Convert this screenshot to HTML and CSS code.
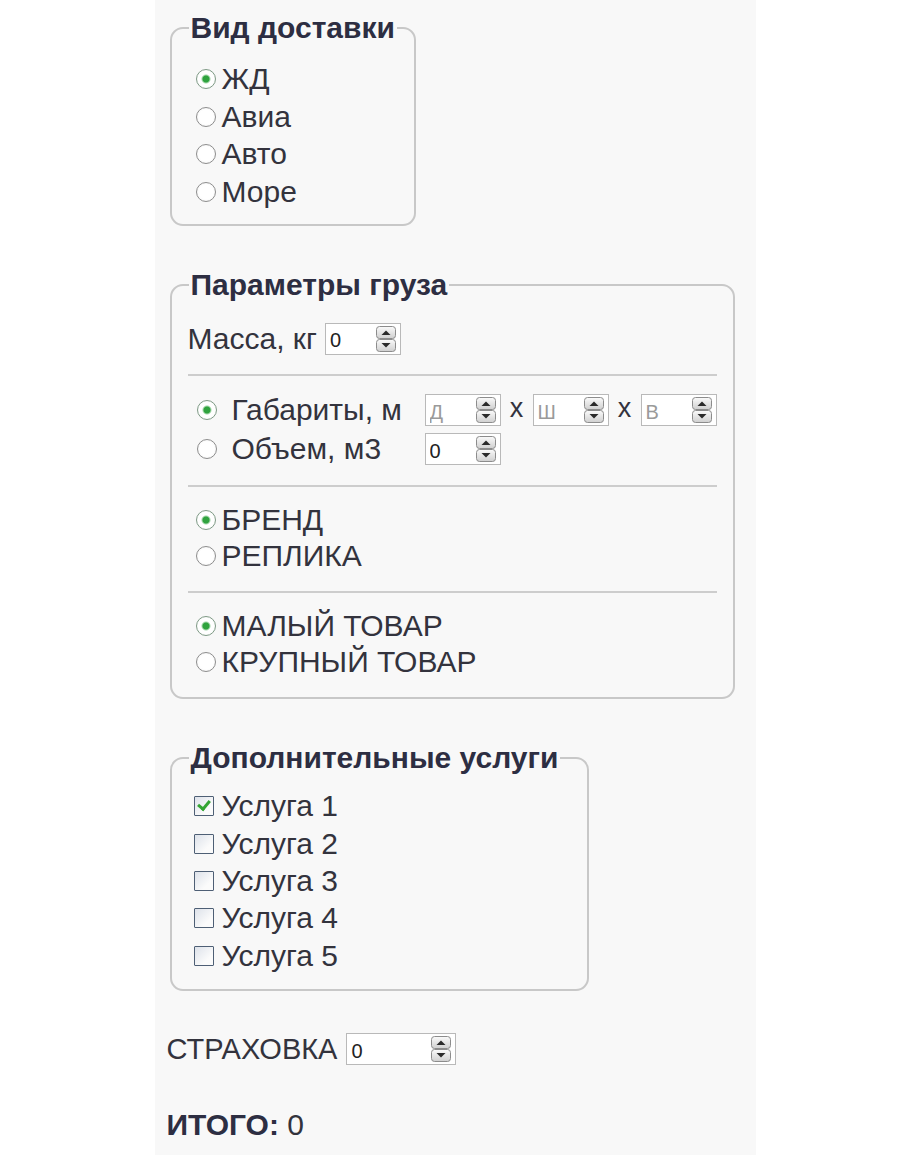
FILE: index.html
```html
<!DOCTYPE html>
<html lang="ru">
<head>
	<meta charset="UTF-8">
	<title>Калькулятор доставки</title>
	<link rel="stylesheet" href="styles.css">
</head>
<body>
	<svg class="defs" width="0" height="0">
		<defs>
			<linearGradient id="btn" x1="0" y1="0" x2="0" y2="1">
				<stop offset="0" stop-color="#fbfbfb"/>
				<stop offset="1" stop-color="#cfcfcf"/>
			</linearGradient>
			<symbol id="spin" viewBox="0 0 20 26">
				<rect x="0.5" y="0.5" width="19" height="12" rx="3" fill="url(#btn)" stroke="#8c8c8c"/>
				<rect x="0.5" y="13.5" width="19" height="12" rx="3" fill="url(#btn)" stroke="#8c8c8c"/>
				<path d="M5.5 9 L10 4.5 L14.5 9 Z" fill="#2a2a2a"/>
				<path d="M5.5 17 L10 21.5 L14.5 17 Z" fill="#2a2a2a"/>
			</symbol>
		</defs>
	</svg>

	<div class="page">

		<fieldset class="box delivery">
			<legend>Вид доставки</legend>
			<label class="opt"><input type="radio" name="dlv" checked>ЖД</label>
			<label class="opt"><input type="radio" name="dlv">Авиа</label>
			<label class="opt"><input type="radio" name="dlv">Авто</label>
			<label class="opt"><input type="radio" name="dlv">Море</label>
		</fieldset>

		<fieldset class="box cargo">
			<legend>Параметры груза</legend>
			<div class="group mass">
				<span>Масса, кг</span>
				<span class="spin"><input type="text" value="0"><svg><use href="#spin"/></svg></span>
			</div>
			<div class="group dims">
				<label class="opt"><input type="radio" name="mode" checked>Габариты, м</label>
				<div class="sizes">
					<span class="spin"><input type="text" placeholder="Д"><svg><use href="#spin"/></svg></span>
					<span class="x">x</span>
					<span class="spin"><input type="text" placeholder="Ш"><svg><use href="#spin"/></svg></span>
					<span class="x">x</span>
					<span class="spin"><input type="text" placeholder="В"><svg><use href="#spin"/></svg></span>
				</div>
				<label class="opt"><input type="radio" name="mode">Объем, м3</label>
				<div class="sizes">
					<span class="spin"><input type="text" value="0"><svg><use href="#spin"/></svg></span>
				</div>
			</div>
			<div class="group pair">
				<label class="opt"><input type="radio" name="brand" checked>БРЕНД</label>
				<label class="opt"><input type="radio" name="brand">РЕПЛИКА</label>
			</div>
			<div class="group pair">
				<label class="opt"><input type="radio" name="size" checked>МАЛЫЙ ТОВАР</label>
				<label class="opt"><input type="radio" name="size">КРУПНЫЙ ТОВАР</label>
			</div>
		</fieldset>

		<fieldset class="box extra">
			<legend>Дополнительные услуги</legend>
			<label class="opt"><input type="checkbox" checked>Услуга 1</label>
			<label class="opt"><input type="checkbox">Услуга 2</label>
			<label class="opt"><input type="checkbox">Услуга 3</label>
			<label class="opt"><input type="checkbox">Услуга 4</label>
			<label class="opt"><input type="checkbox">Услуга 5</label>
		</fieldset>

		<div class="insurance">
			<span>СТРАХОВКА</span>
			<span class="spin long"><input type="text" value="0"><svg><use href="#spin"/></svg></span>
		</div>

		<div class="total"><b>ИТОГО:</b> 0</div>

	</div>
</body>
</html>
```

FILE: styles.css
```css
body{
	margin: 0;
	background: #fff;
	font-family: "Liberation Sans", Arial, sans-serif;
	color: #33333d;
}
.defs{
	position: absolute;
}
.page{
	width: 601px;
	min-height: 1155px;
	margin: 0 auto;
	padding: 0 0 0 12px;
	box-sizing: border-box;
	background: #f8f8f8;
	font-size: 30px;
	overflow: hidden;
}
.box{
	margin: 13px 0 0 3px;
	padding: 0 16px;
	border: 2px solid #c8c8c8;
	border-radius: 13px;
}
.box legend{
	padding: 0 2px;
	margin-left: 1px;
	font-weight: bold;
	line-height: 30px;
	color: #2d2e42;
}
.delivery{
	width: 210px;
	padding-top: 17px;
	padding-bottom: 13px;
}
.delivery .opt{
	height: 37.7px;
}
.cargo{
	width: 528px;
	margin-top: 44px;
	padding-bottom: 0;
}
.extra{
	width: 383px;
	margin-top: 44px;
	padding-top: 15px;
	padding-bottom: 15px;
}
.opt{
	display: flex;
	align-items: center;
	height: 37.3px;
	white-space: nowrap;
}

/* radio & checkbox */
.opt input{
	-webkit-appearance: none;
	appearance: none;
	box-sizing: border-box;
	margin: 0 6px 0 8px;
	flex: none;
}
.opt input[type=radio]{
	width: 20px;
	height: 20px;
	border: 1.5px solid #8d8d8d;
	border-radius: 50%;
	background: radial-gradient(circle, #fff 0 55%, #ececec 100%);
}
.opt input[type=radio]:checked{
	border-color: #7f9a86;
	background: radial-gradient(circle, #2fa33e 0 3px, #a5d8ab 4px, #fff 5px, #fff 60%, #e4eee6 100%);
}
.opt input[type=checkbox]{
	position: relative;
	width: 20px;
	height: 20px;
	margin-left: 6px;
	margin-right: 8px;
	border: 1.5px solid #4e5f75;
	border-radius: 1px;
	background: linear-gradient(135deg, #dde2ea, #fbfbfb 70%);
}
.opt input[type=checkbox]:checked::after{
	content: "";
	position: absolute;
	left: 5px;
	top: 1px;
	width: 5px;
	height: 9px;
	border: solid #33a533;
	border-width: 0 3px 3px 0;
	transform: rotate(40deg);
}

/* cargo groups */
.group{
	padding: 15px 0 17px;
	border-top: 2px solid #cdcdcd;
}
.box legend + .group{
	border-top: none;
	padding-top: 21px;
	padding-bottom: 17px;
}
.pair .opt{
	height: 36px;
}
.mass{
	display: flex;
	align-items: center;
	gap: 8px;
	height: 36px;
}
.dims{
	display: grid;
	grid-template-columns: 237px auto;
	grid-auto-rows: 39px;
	align-items: center;
	padding-bottom: 16px;
}
.dims .opt{
	height: auto;
}
.dims .opt input{
	margin-left: 9px;
	margin-right: 15px;
}
.sizes{
	display: flex;
	align-items: center;
}
.x{
	width: 32px;
	text-align: center;
	font-size: 27px;
	line-height: 20px;
	padding-bottom: 4px;
}

/* spin fields */
.spin{
	display: inline-flex;
	align-items: center;
	width: 76px;
	height: 32px;
	box-sizing: border-box;
	border: 1.5px solid #b9b9b9;
	background: #fff;
}
.spin input{
	width: 100%;
	min-width: 0;
	height: 100%;
	padding: 4px 0 0 4px;
	box-sizing: border-box;
	border: none;
	outline: none;
	background: transparent;
	font-family: "Liberation Sans", Arial, sans-serif;
	font-size: 20px;
	color: #222;
}
.spin input::placeholder{
	color: #9a9a9a;
}
.spin svg{
	flex: none;
	width: 20px;
	height: 26px;
	margin-right: 4px;
}
.spin.long{
	width: 110px;
}

.insurance{
	display: flex;
	align-items: center;
	gap: 9px;
	margin-top: 42px;
	height: 32px;
	font-size: 29px;
}
.total{
	margin-top: 43px;
}
.total b{
	color: #2d2e42;
}
```
